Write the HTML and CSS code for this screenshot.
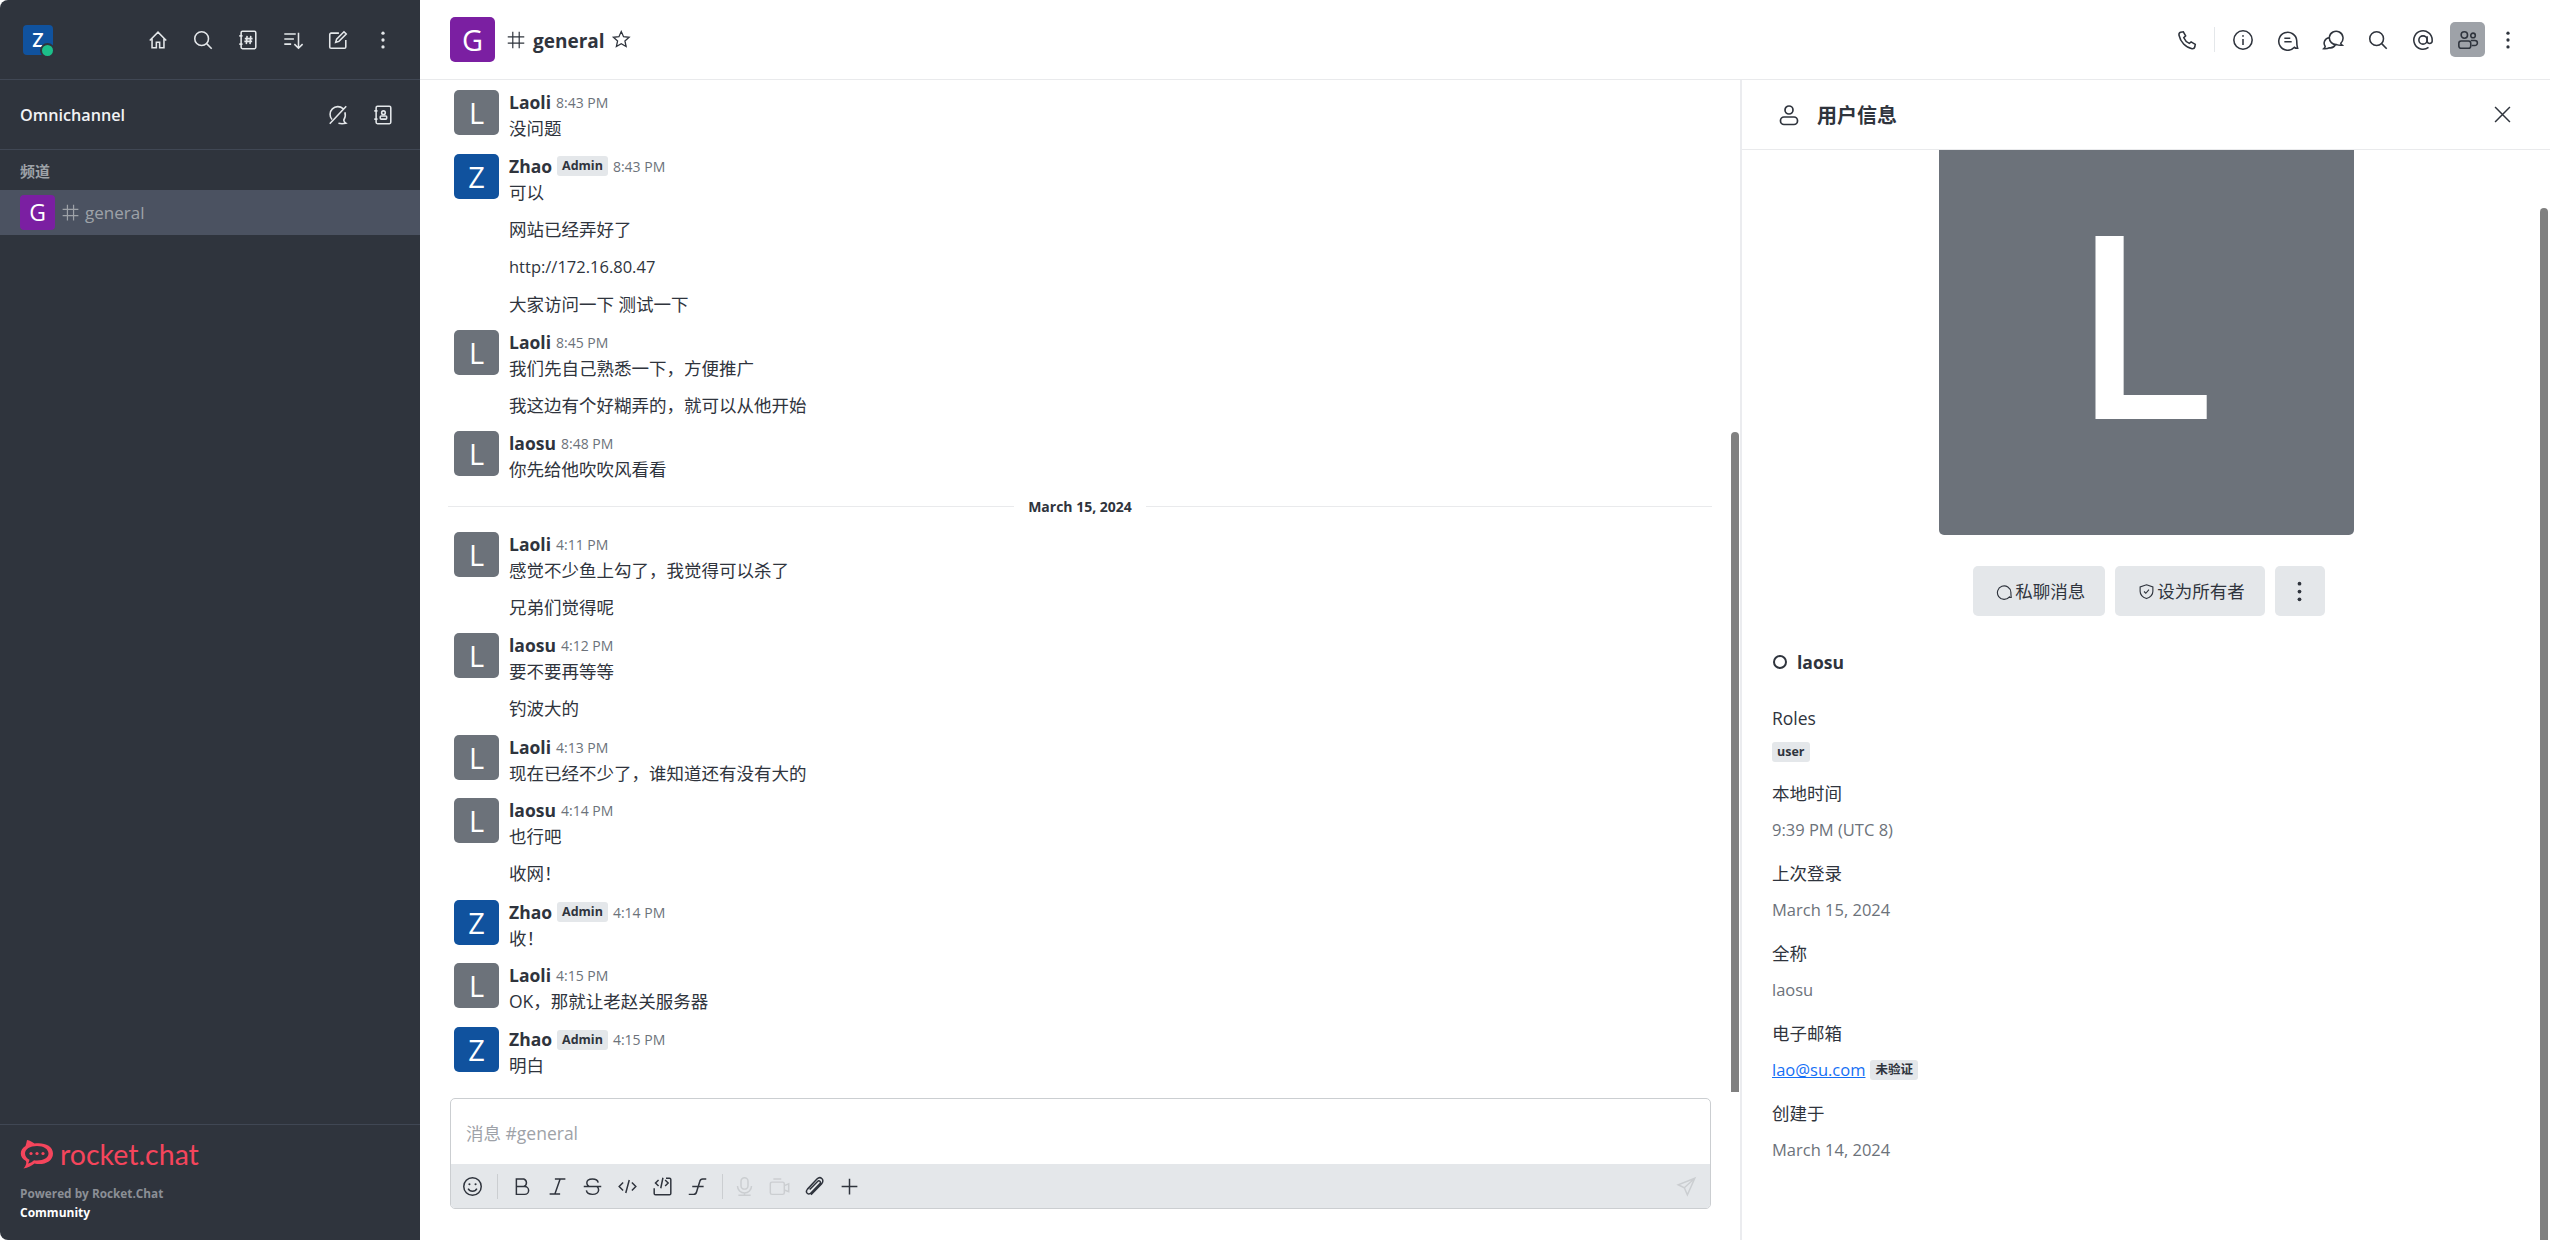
FILE: index.html
```html
<!DOCTYPE html>
<html lang="zh">
<head>
  <meta charset="UTF-8" />
  <title>general</title>
  <link rel="stylesheet" href="styles.css">
</head>
<body>
  <!-- icon sprite -->
  <svg class="sprite" xmlns="http://www.w3.org/2000/svg">
    <symbol id="i-home" viewBox="0 0 24 24"><path d="M3 12.500 12 3.500l9 9M5.500 10.500V20.500h4.700v-6h3.600v6h4.700V10.500"/></symbol>
    <symbol id="i-search" viewBox="0 0 24 24"><circle cx="10.500" cy="10.500" r="7.500"/><path d="m16 16 5.500 5.500"/></symbol>
    <symbol id="i-directory" viewBox="0 0 24 24"><rect x="4.500" y="2.500" width="16" height="19" rx="1.500"/><path d="M2.500 7.500h3.500M2.500 16.500h3.500M11 7.500l-.8 9M15 7.500l-.8 9M8.500 10.500h8.500M8 13.500h8.500"/></symbol>
    <symbol id="i-sort" viewBox="0 0 24 24"><path d="M2.500 5.500h12.500M2.500 11h10.500M2.500 16.500h7.500M18 4v17M13.500 16.500 18 21l4.500-4.500"/></symbol>
    <symbol id="i-compose" viewBox="0 0 24 24"><path d="M20.500 12v7.500a1.500 1.500 0 0 1-1.500 1.500H4.500A1.500 1.500 0 0 1 3 19.500V6a1.500 1.500 0 0 1 1.500-1.500H13"/><path d="m9.500 14.500 1-3.500 8-8 2.500 2.500-8 8z"/></symbol>
    <symbol id="i-kebab" viewBox="0 0 24 24"><circle class="dot" cx="12" cy="4.500" r="1.800"/><circle class="dot" cx="12" cy="12" r="1.800"/><circle class="dot" cx="12" cy="19.500" r="1.800"/></symbol>
    <symbol id="i-queue" viewBox="0 0 24 24"><path d="M3 21.500 21 2.500M5.500 17A8.500 8.500 0 0 1 17.500 5M19.500 9c1 3 .5 6-1.200 8.500.2 1.500 1 2.700 2.200 3.500-3 .7-6 .5-8 0"/></symbol>
    <symbol id="i-contact" viewBox="0 0 24 24"><rect x="4.500" y="2.500" width="16" height="19" rx="1.500"/><path d="M2.500 7.500h3.500M2.500 16.500h3.500"/><circle cx="12.500" cy="9.500" r="2"/><rect x="9" y="13" width="7" height="3.500" rx="1"/></symbol>
    <symbol id="i-hash" viewBox="0 0 24 24"><path d="M8.500 3v18M15.500 3v18M3 8.500h18M3 15.500h18"/></symbol>
    <symbol id="i-star" viewBox="0 0 24 24"><path d="m12 3 2.700 6 6.500.7-4.900 4.300 1.400 6.500L12 17.200 6.300 20.500 7.700 14 2.800 9.700 9.300 9z"/></symbol>
    <symbol id="i-phone" viewBox="0 0 24 24"><path d="M5 3.500 8 3l2.500 4.500L8.500 9.500c1 2.500 3.500 5 6 6.200l2-1.700 4.500 2.700-.5 3c-.3 1.200-1.500 2-3 1.800C10.500 20.300 4.800 14 3.300 6.800 3 5.300 3.800 3.900 5 3.500z"/></symbol>
    <symbol id="i-info" viewBox="0 0 24 24"><circle cx="12" cy="12" r="10"/><path d="M12 11v6.500"/><circle class="dot" cx="12" cy="7.500" r="1"/></symbol>
    <symbol id="i-thread" viewBox="0 0 24 24"><path d="M22.500 21c-1.500.2-2.700-.2-3.500-1A9.800 9.800 0 1 1 21.500 12.500c0 3 .2 6 1 8.500z"/><path d="M8 10h6.500M8 14h8"/></symbol>
    <symbol id="i-discussion" viewBox="0 0 24 24"><path d="M8 9a7.500 7.500 0 1 1 12.500 6.500c.3 1 .8 1.700 1.500 2.200-2.500.3-4.500 0-6-.7A7.500 7.500 0 0 1 8 9z"/><path d="M8 9.500A6 6 0 0 0 3.500 19c-.2 1-.7 1.800-1.500 2.500 2.500.2 4.500-.2 6-1a6 6 0 0 0 6.500-3.500"/></symbol>
    <symbol id="i-at" viewBox="0 0 24 24"><circle cx="12" cy="12" r="4.500"/><path d="M16.500 8v5.500a2.800 2.800 0 0 0 5.500 0V12a10 10 0 1 0-4 8"/></symbol>
    <symbol id="i-members" viewBox="0 0 24 24"><circle cx="8" cy="6.500" r="3.500"/><circle cx="17.500" cy="7" r="2.500"/><rect x="2" y="13" width="13" height="8" rx="2.500"/><path d="M15 12.500h4.500a2.500 2.500 0 0 1 0 5.500H16"/></symbol>
    <symbol id="i-close" viewBox="0 0 24 24"><path d="m3.500 3.500 17 17M20.500 3.500l-17 17"/></symbol>
    <symbol id="i-user" viewBox="0 0 24 24"><circle cx="12" cy="7" r="4"/><rect x="3.500" y="14" width="17" height="7.500" rx="3.500"/></symbol>
    <symbol id="i-emoji" viewBox="0 0 24 24"><circle cx="12" cy="12" r="10"/><circle class="dot" cx="8.500" cy="9.500" r="1.200"/><circle class="dot" cx="15.500" cy="9.500" r="1.200"/><path d="M7 14.500c1 2 3 3 5 3s4-1 5-3"/></symbol>
    <symbol id="i-bold" viewBox="0 0 24 24"><path d="M5 3.500h8.500a4.500 4.500 0 0 1 0 8.500H5zM5 12h9.500a4.500 4.500 0 0 1 0 9H5z"/></symbol>
    <symbol id="i-italic" viewBox="0 0 24 24"><path d="M9 3.500h12M3 20.500h12M15 3.500 9 20.500"/></symbol>
    <symbol id="i-strike" viewBox="0 0 24 24"><path d="M18.500 7.500C18 5 15.500 3.500 12 3.500c-4 0-6.500 2-6.500 4.500 0 1.500.8 3 2.500 4M2 12h20M17 12c1.200 1 2 2.300 2 4 0 3-3 5-7 5s-6.500-1.500-7-4.500"/></symbol>
    <symbol id="i-code" viewBox="0 0 24 24"><path d="M7 7.500 2.500 12 7 16.500M17 7.500l4.500 4.500-4.500 4.500M14 4.500 10 19.500"/></symbol>
    <symbol id="i-block" viewBox="0 0 24 24"><path d="M16 2.500h4a1.500 1.500 0 0 1 1.500 1.500v16a1.500 1.500 0 0 1-1.500 1.500H4A1.500 1.500 0 0 1 2.500 20v-6M7.500 4.500 4 8l3.500 3.500M15 4.500l3.500 3.500L15 11.500M12.500 2 10 14"/></symbol>
    <symbol id="i-formula" viewBox="0 0 24 24"><path d="M22 3.500h-4c-2 0-3 1-3.500 3L11 18c-.5 2-1.500 3-3.500 3H2M6 12h13"/></symbol>
    <symbol id="i-mic" viewBox="0 0 24 24"><rect x="8" y="2" width="8" height="13" rx="4"/><path d="M4 11.500a8 8 0 0 0 16 0M12 19.500v2M5 22h14"/></symbol>
    <symbol id="i-video" viewBox="0 0 24 24"><rect x="1.500" y="7" width="16" height="14" rx="2"/><path d="M5 3.500h9M17.500 11l5-2v9l-5-2"/></symbol>
    <symbol id="i-clip" viewBox="0 0 24 24"><path d="m8 21.500 12-12.500c2-2.200 2-4.700.3-6.200-1.700-1.500-3.800-1-5.500.7L4 15c-1.500 1.700-1.500 3.500-.3 4.700 1.300 1.200 3 1 4.500-.5L18 9c1-1 1-2.300.2-3-.8-.7-2-.5-3 .5L6.500 15.500"/></symbol>
    <symbol id="i-plus" viewBox="0 0 24 24"><path d="M12 3v18M3 12h18"/></symbol>
    <symbol id="i-send" viewBox="0 0 24 24"><path d="M21.500 2.500 2.500 10l7 3.500 3.500 8zM9.500 13.500l12-11"/></symbol>
    <symbol id="i-bubble" viewBox="0 0 24 24"><path d="M21.500 20.500c-1 0-1.800-.3-2.500-1A9.500 9.500 0 1 1 21 13c0 2.500.3 5 .5 7.500z"/></symbol>
    <symbol id="i-shield" viewBox="0 0 24 24"><path d="M12 2.500 21 5.500v6c0 5-3.500 8.500-9 10.500-5.500-2-9-5.500-9-10.500v-6z"/><path d="m8.500 12 2.500 2.500 4.500-5"/></symbol>
  </svg>

  <aside class="sidebar">
    <div class="side-top">
      <div class="me">Z<span class="me-status"></span></div>
      <div class="side-icons">
        <button class="icon-btn"><svg class="ico"><use href="#i-home"/></svg></button>
        <button class="icon-btn"><svg class="ico"><use href="#i-search"/></svg></button>
        <button class="icon-btn"><svg class="ico"><use href="#i-directory"/></svg></button>
        <button class="icon-btn"><svg class="ico"><use href="#i-sort"/></svg></button>
        <button class="icon-btn"><svg class="ico"><use href="#i-compose"/></svg></button>
        <button class="icon-btn"><svg class="ico"><use href="#i-kebab"/></svg></button>
      </div>
    </div>
    <div class="side-omni">
      <span class="omni-title">Omnichannel</span>
      <div class="side-icons">
        <button class="icon-btn"><svg class="ico"><use href="#i-queue"/></svg></button>
        <button class="icon-btn"><svg class="ico"><use href="#i-contact"/></svg></button>
      </div>
    </div>
    <div class="side-section">频道</div>
    <div class="room-row">
      <span class="room-avatar">G</span>
      <svg class="ico ico-hash"><use href="#i-hash"/></svg>
      <span>general</span>
    </div>
    <div class="side-footer">
      <div class="rc-logo">
        <svg class="rc-mark" viewBox="0 0 34 30"><path d="M7 1c3 .5 5.500 2 7.500 3.500 9-1.500 18.500 2 18.500 10 0 8.500-10 12-18.500 10C12 26.500 8 29 3.500 29.500 5.500 27 7 24.500 6 22 2.500 20 .8 17.500 .8 14.500c0-3 1.700-5.700 4.700-7.500C6.300 5 6.500 3 7 1z"/><path class="rc-inner" d="M17 7c-7 0-12 3-12 7.500 0 3 2 5 4.500 6.200-.2 1.600-.8 2.800-1.500 3.800 2.500-.4 4.500-1.600 6-3.200 1 .2 2 .2 3 .2 7 0 11.500-3 11.500-7S24 7 17 7z"/><circle cx="11" cy="14.500" r="1.600"/><circle cx="17" cy="14.500" r="1.600"/><circle cx="23" cy="14.500" r="1.600"/></svg>
        <span class="rc-word">rocket.chat</span>
      </div>
      <div class="powered">Powered by Rocket.Chat</div>
      <div class="edition">Community</div>
    </div>
  </aside>

  <div class="main">
    <header class="room-head">
      <span class="head-avatar">G</span>
      <svg class="ico ico-thin"><use href="#i-hash"/></svg>
      <span class="head-title">general</span>
      <svg class="ico ico-star"><use href="#i-star"/></svg>
      <div class="head-actions">
        <button class="icon-btn"><svg class="ico"><use href="#i-phone"/></svg></button>
        <span class="head-sep"></span>
        <button class="icon-btn"><svg class="ico"><use href="#i-info"/></svg></button>
        <button class="icon-btn"><svg class="ico"><use href="#i-thread"/></svg></button>
        <button class="icon-btn"><svg class="ico"><use href="#i-discussion"/></svg></button>
        <button class="icon-btn"><svg class="ico"><use href="#i-search"/></svg></button>
        <button class="icon-btn"><svg class="ico"><use href="#i-at"/></svg></button>
        <button class="icon-btn active"><svg class="ico"><use href="#i-members"/></svg></button>
        <button class="icon-btn kebab"><svg class="ico"><use href="#i-kebab"/></svg></button>
      </div>
    </header>

    <div class="room-body">
      <section class="chat">
        <div class="messages">
          <div class="msg">
            <span class="avatar grey">L</span>
            <div class="msg-body">
              <div class="msg-head"><b>Laoli</b><time>8:43 PM</time></div>
              <div class="msg-text">没问题</div>
            </div>
          </div>
          <div class="msg">
            <span class="avatar blue">Z</span>
            <div class="msg-body">
              <div class="msg-head"><b>Zhao</b><span class="tag">Admin</span><time>8:43 PM</time></div>
              <div class="msg-text">可以</div>
            </div>
          </div>
          <div class="msg-next">网站已经弄好了</div>
          <div class="msg-next msg-url">http://172.16.80.47</div>
          <div class="msg-next">大家访问一下 测试一下</div>
          <div class="msg">
            <span class="avatar grey">L</span>
            <div class="msg-body">
              <div class="msg-head"><b>Laoli</b><time>8:45 PM</time></div>
              <div class="msg-text">我们先自己熟悉一下，方便推广</div>
            </div>
          </div>
          <div class="msg-next">我这边有个好糊弄的，就可以从他开始</div>
          <div class="msg">
            <span class="avatar grey">L</span>
            <div class="msg-body">
              <div class="msg-head"><b>laosu</b><time>8:48 PM</time></div>
              <div class="msg-text">你先给他吹吹风看看</div>
            </div>
          </div>

          <div class="day"><span>March 15, 2024</span></div>

          <div class="msg">
            <span class="avatar grey">L</span>
            <div class="msg-body">
              <div class="msg-head"><b>Laoli</b><time>4:11 PM</time></div>
              <div class="msg-text">感觉不少鱼上勾了，我觉得可以杀了</div>
            </div>
          </div>
          <div class="msg-next">兄弟们觉得呢</div>
          <div class="msg">
            <span class="avatar grey">L</span>
            <div class="msg-body">
              <div class="msg-head"><b>laosu</b><time>4:12 PM</time></div>
              <div class="msg-text">要不要再等等</div>
            </div>
          </div>
          <div class="msg-next">钓波大的</div>
          <div class="msg">
            <span class="avatar grey">L</span>
            <div class="msg-body">
              <div class="msg-head"><b>Laoli</b><time>4:13 PM</time></div>
              <div class="msg-text">现在已经不少了，谁知道还有没有大的</div>
            </div>
          </div>
          <div class="msg">
            <span class="avatar grey">L</span>
            <div class="msg-body">
              <div class="msg-head"><b>laosu</b><time>4:14 PM</time></div>
              <div class="msg-text">也行吧</div>
            </div>
          </div>
          <div class="msg-next">收网！</div>
          <div class="msg">
            <span class="avatar blue">Z</span>
            <div class="msg-body">
              <div class="msg-head"><b>Zhao</b><span class="tag">Admin</span><time>4:14 PM</time></div>
              <div class="msg-text">收！</div>
            </div>
          </div>
          <div class="msg">
            <span class="avatar grey">L</span>
            <div class="msg-body">
              <div class="msg-head"><b>Laoli</b><time>4:15 PM</time></div>
              <div class="msg-text">OK，那就让老赵关服务器</div>
            </div>
          </div>
          <div class="msg">
            <span class="avatar blue">Z</span>
            <div class="msg-body">
              <div class="msg-head"><b>Zhao</b><span class="tag">Admin</span><time>4:15 PM</time></div>
              <div class="msg-text">明白</div>
            </div>
          </div>
        </div>
        <div class="chat-scroll"></div>

        <div class="composer">
          <div class="composer-input">消息 #general</div>
          <div class="composer-bar">
            <button class="tool"><svg class="ico"><use href="#i-emoji"/></svg></button>
            <span class="tool-sep"></span>
            <button class="tool"><svg class="ico"><use href="#i-bold"/></svg></button>
            <button class="tool"><svg class="ico"><use href="#i-italic"/></svg></button>
            <button class="tool"><svg class="ico"><use href="#i-strike"/></svg></button>
            <button class="tool"><svg class="ico"><use href="#i-code"/></svg></button>
            <button class="tool"><svg class="ico"><use href="#i-block"/></svg></button>
            <button class="tool"><svg class="ico"><use href="#i-formula"/></svg></button>
            <span class="tool-sep"></span>
            <button class="tool off first-off"><svg class="ico"><use href="#i-mic"/></svg></button>
            <button class="tool off"><svg class="ico"><use href="#i-video"/></svg></button>
            <button class="tool"><svg class="ico"><use href="#i-clip"/></svg></button>
            <button class="tool"><svg class="ico"><use href="#i-plus"/></svg></button>
            <button class="tool off send"><svg class="ico"><use href="#i-send"/></svg></button>
          </div>
        </div>
      </section>

      <section class="panel">
        <div class="panel-head">
          <svg class="ico"><use href="#i-user"/></svg>
          <span class="panel-title">用户信息</span>
          <svg class="ico ico-close"><use href="#i-close"/></svg>
        </div>
        <div class="panel-body">
          <div class="big-avatar-wrap"><div class="big-avatar">L</div></div>
          <div class="panel-btns">
            <button class="btn"><svg class="ico ico-sm"><use href="#i-bubble"/></svg>私聊消息</button>
            <button class="btn"><svg class="ico ico-sm"><use href="#i-shield"/></svg>设为所有者</button>
            <button class="btn btn-more"><svg class="ico"><use href="#i-kebab"/></svg></button>
          </div>
          <div class="user-name"><span class="status-ring"></span><b>laosu</b></div>
          <dl class="info">
            <div>
              <dt>Roles</dt>
              <dd class="roles"><span class="tag tag-role">user</span></dd>
            </div>
            <div>
              <dt>本地时间</dt>
              <dd>9:39 PM (UTC 8)</dd>
            </div>
            <div>
              <dt>上次登录</dt>
              <dd>March 15, 2024</dd>
            </div>
            <div>
              <dt>全称</dt>
              <dd>laosu</dd>
            </div>
            <div>
              <dt>电子邮箱</dt>
              <dd><a href="#">lao@su.com</a><span class="tag tag-mail">未验证</span></dd>
            </div>
            <div>
              <dt>创建于</dt>
              <dd>March 14, 2024</dd>
            </div>
          </dl>
        </div>
        <div class="panel-scroll"></div>
      </section>
    </div>
  </div>
</body>
</html>
```

FILE: styles.css
```css
* {
  box-sizing: border-box;
  margin: 0;
  padding: 0;
}

body {
  display: flex;
  height: 100vh;
  overflow: hidden;
  background-color: #fff;
  color: #2f343d;
  font-family: "Open Sans", "Noto Sans CJK SC", sans-serif;
  font-size: 17.5px;
  line-height: 25px;
}

button {
  border: none;
  background: none;
  color: inherit;
  font: inherit;
}

.sprite {
  display: none;
}

.ico {
  width: 25px;
  height: 25px;
  flex-shrink: 0;
  fill: none;
  stroke: currentColor;
  stroke-width: 1.7;
}

.dot {
  fill: currentColor;
  stroke: none;
}

.icon-btn {
  width: 35px;
  height: 35px;
  display: flex;
  align-items: center;
  justify-content: center;
  border-radius: 5px;
}

.icon-btn .ico {
  width: 22px;
  height: 22px;
}

/* sidebar */
.sidebar {
  width: 420px;
  display: flex;
  flex-direction: column;
  flex-shrink: 0;
  background-color: #2f343d;
  color: #e4e7ea;
  border-radius: 8px 0 0 8px;
}

.side-top {
  height: 80px;
  display: flex;
  align-items: center;
  justify-content: space-between;
  padding: 0 20px 0 23px;
  border-bottom: 1px solid #404754;
}

.me {
  position: relative;
  width: 30px;
  height: 30px;
  border-radius: 4px;
  background-color: #10529e;
  color: #fff;
  font-size: 20px;
  font-weight: 600;
  line-height: 30px;
  text-align: center;
}

.me-status {
  position: absolute;
  right: -2px;
  bottom: -3px;
  width: 15px;
  height: 15px;
  border-radius: 50%;
  background-color: #1cbf8a;
  border: 2px solid #2f343d;
}

.side-icons {
  display: flex;
  gap: 10px;
}

.side-omni {
  height: 70px;
  display: flex;
  align-items: center;
  justify-content: space-between;
  padding: 0 20px;
  border-bottom: 1px solid #404754;
}

.omni-title {
  padding-top: 2px;
  font-weight: 600;
  font-size: 16.200px;
  color: #f2f3f5;
}

.side-section {
  margin-top: 8px;
  height: 32px;
  padding-left: 20px;
  font-size: 15px;
  font-weight: 600;
  line-height: 26px;
  color: #9ea2a8;
}

.room-row {
  height: 45px;
  display: flex;
  align-items: center;
  gap: 4.500px;
  padding-left: 20px;
  background-color: #4b5261;
  color: #9ea2a8;
  font-size: 17px;
}

.room-avatar {
  width: 35px;
  height: 35px;
  border-radius: 4px;
  background-color: #7b1fa2;
  color: #fff;
  font-size: 23px;
  line-height: 35px;
  text-align: center;
}

.ico-hash {
  width: 21px;
  height: 21px;
  stroke-width: 1.4;
}

.side-footer {
  margin-top: auto;
  height: 116px;
  padding: 13px 20px 0;
  border-top: 1px solid #404754;
}

.rc-logo {
  display: flex;
  align-items: center;
  gap: 6px;
  height: 32px;
}

.rc-mark {
  width: 34px;
  height: 30px;
  fill: #f5455c;
}

.rc-mark .rc-inner {
  fill: #2f343d;
}

.rc-word {
  font-family: "Lato", sans-serif;
  font-size: 28.500px;
  line-height: 32px;
  color: #f5455c;
}

.powered {
  margin-top: 12.500px;
  font-size: 11.800px;
  font-weight: 700;
  line-height: 20px;
  color: #8b8f96;
}

.edition {
  font-size: 12px;
  font-weight: 700;
  line-height: 20px;
  color: #fff;
}

/* main area */
.main {
  flex: 1;
  min-width: 0;
  display: flex;
  flex-direction: column;
}

.room-head {
  height: 80px;
  flex-shrink: 0;
  display: flex;
  align-items: center;
  padding: 0 25px 0 30px;
  border-bottom: 1px solid #e9eaec;
}

.head-avatar {
  width: 45px;
  height: 45px;
  margin-right: 10px;
  border-radius: 5px;
  background-color: #7b1fa2;
  color: #fff;
  font-size: 29px;
  line-height: 45px;
  text-align: center;
}

.ico-thin {
  width: 22px;
  height: 22px;
  stroke-width: 1.3;
}

.head-title {
  margin-left: 6px;
  padding-top: 3px;
  font-size: 19px;
  font-weight: 700;
}

.ico-star {
  width: 20.500px;
  height: 20.500px;
  margin-left: 6px;
  stroke-width: 1.5;
}

.head-actions {
  margin-left: auto;
  display: flex;
  align-items: center;
  gap: 10px;
}

.icon-btn.active {
  background-color: #9ea2a8;
}

.icon-btn.kebab {
  margin-left: -5px;
}

.head-sep {
  height: 25px;
  border-left: 1px solid #e4e7ea;
}

.room-body {
  flex: 1;
  min-height: 0;
  display: flex;
}

.chat {
  position: relative;
  width: 1320px;
  display: flex;
  flex-direction: column;
}

.messages {
  flex: 1;
  min-height: 0;
  overflow: hidden;
  padding-top: 5px;
}

.msg {
  display: flex;
  gap: 10px;
  height: 63.750px;
  padding: 5px 34px 0;
}

.avatar {
  width: 45px;
  height: 45px;
  flex-shrink: 0;
  border-radius: 5px;
  color: #fff;
  font-size: 29px;
  line-height: 45px;
  text-align: center;
}

.grey {
  background-color: #6c727a;
}

.blue {
  background-color: #10529e;
}

.msg-head {
  display: flex;
  align-items: center;
  gap: 5px;
  height: 25px;
}

.msg-head b {
  font-weight: 700;
}

.msg-head time {
  font-size: 14px;
  color: #6c727a;
}

.msg-text {
  margin-top: 1px;
}

.tag {
  height: 20px;
  padding: 0 5px;
  border-radius: 3px;
  background-color: #e4e7ea;
  font-size: 12.500px;
  font-weight: 700;
  line-height: 20px;
}

.msg-next {
  height: 37.500px;
  padding: 4px 34px 0 89px;
}

.msg-url {
  font-size: 16.500px;
}

.day {
  display: flex;
  align-items: center;
  gap: 14px;
  height: 37px;
  padding-bottom: 4px;
  margin: 0 28px;
  font-size: 14px;
  font-weight: 700;
}

.day::before,
.day::after {
  content: "";
  flex: 1;
  border-top: 1px solid #e9eaec;
}

.chat-scroll {
  position: absolute;
  top: 352px;
  left: 1311px;
  width: 7.500px;
  height: 660px;
  border-radius: 4px 4px 0 0;
  background-color: #808080;
}

/* composer */
.composer {
  flex-shrink: 0;
  height: 111px;
  margin: 0 29px 31px 30px;
  border: 1px solid #cbced1;
  border-radius: 5px;
  overflow: hidden;
}

.composer-input {
  height: 65px;
  padding: 22px 15px 0;
  color: #9ea2a8;
}

.composer-bar {
  height: 44px;
  display: flex;
  align-items: center;
  padding-left: 4px;
  background-color: #e4e7ea;
}

.tool {
  width: 35px;
  height: 35px;
  display: flex;
  align-items: center;
  justify-content: center;
}

.tool .ico {
  width: 21px;
  height: 21px;
}

.tool.off {
  color: #cbced1;
}

.tool-sep {
  height: 25px;
  margin: 0 7px;
  border-left: 1px solid #cbced1;
}

.tool.first-off {
  margin-left: -3px;
}

.tool.send {
  margin-left: auto;
  margin-right: 6px;
}

/* user info panel */
.panel {
  position: relative;
  flex: 1;
  min-width: 0;
  display: flex;
  flex-direction: column;
  border-left: 2px solid #ebecef;
}

.panel-head {
  height: 70px;
  flex-shrink: 0;
  display: flex;
  align-items: center;
  padding: 0 37.500px 0 35px;
  border-bottom: 1px solid #e9eaec;
}

.panel-head .ico {
  width: 24px;
  height: 24px;
}

.panel-title {
  margin-left: 16px;
  padding-top: 2px;
  font-size: 20px;
  font-weight: 700;
}

.panel-head .ico-close {
  margin-left: auto;
  width: 21px;
  height: 21px;
}

.panel-body {
  flex: 1;
  min-height: 0;
  overflow: hidden;
  padding: 0 24px 0 30px;
}

.big-avatar-wrap {
  display: flex;
  justify-content: center;
  padding-right: 5px;
  margin-top: -30px;
}

.big-avatar {
  width: 415px;
  height: 415px;
  border-radius: 5px;
  background-color: #6c727a;
  color: #fff;
  font-family: "Inter", sans-serif;
  font-size: 252px;
  font-weight: 500;
  line-height: 415px;
  text-align: center;
}

.panel-btns {
  display: flex;
  justify-content: center;
  gap: 10px;
  margin-top: 31px;
}

.btn {
  height: 50px;
  display: flex;
  align-items: center;
  padding: 0 20px;
  border-radius: 5px;
  background-color: #e4e7ea;
}

.btn-more {
  width: 50px;
  padding: 0;
  justify-content: center;
}

.ico-sm {
  width: 17px;
  height: 17px;
  margin: 0 2.500px;
  stroke-width: 1.6;
}

.user-name {
  display: flex;
  align-items: center;
  gap: 10px;
  height: 25px;
  margin-top: 33.500px;
  padding-left: 1px;
}

.status-ring {
  width: 14px;
  height: 14px;
  border-radius: 50%;
  border: 2px solid #2f343d;
}

.info {
  display: flex;
  flex-direction: column;
  gap: 19px;
  margin-top: 31.500px;
}

.info dt {
  margin-bottom: 11px;
}

.info dd {
  display: flex;
  align-items: center;
  gap: 5px;
  font-size: 16.500px;
  color: #6c727a;
}

.info dd.roles {
  height: 20px;
}

.tag-role,
.tag-mail {
  color: #2f343d;
}

.info a {
  color: #156ff5;
}

.panel-scroll {
  position: absolute;
  top: 128px;
  right: 2px;
  width: 8px;
  bottom: 0;
  border-radius: 4px 4px 0 0;
  background-color: #808080;
}
```
